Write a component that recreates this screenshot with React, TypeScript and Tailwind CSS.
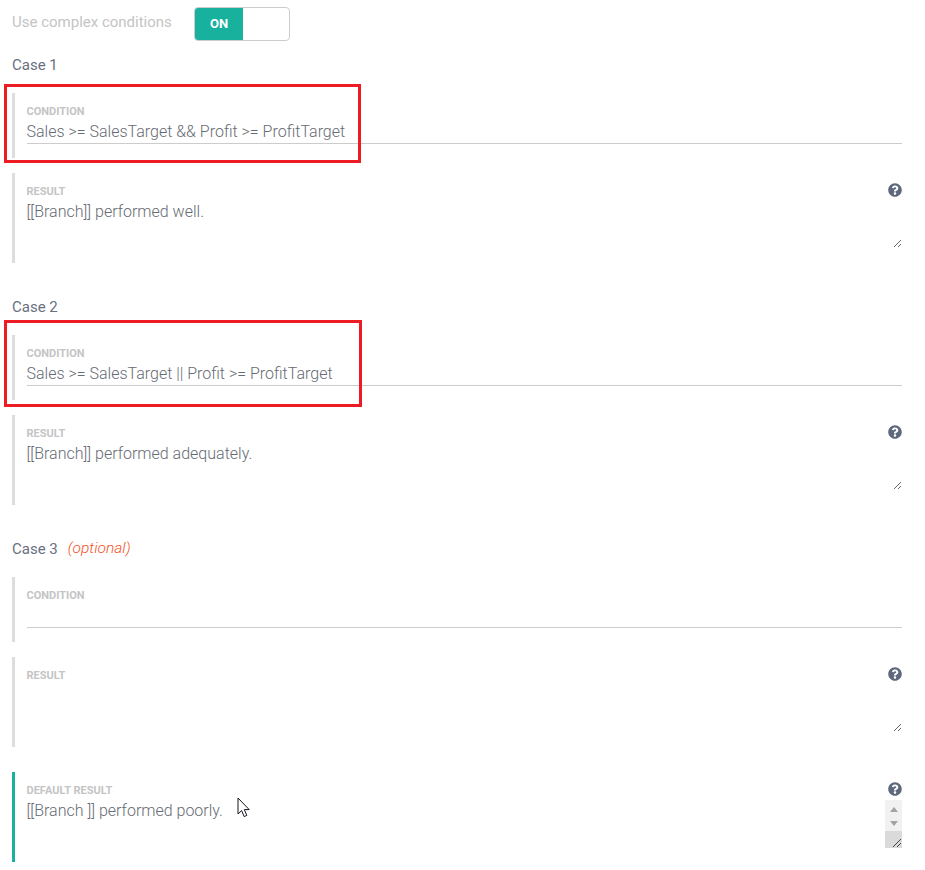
import { FaQuestionCircle } from "react-icons/fa";

type FieldProps = {
  label: string;
  value?: string;
};

function HelpIcon() {
  return <FaQuestionCircle className="absolute right-0 top-[10px] text-[14px] text-[#5d687c]" />;
}

function ConditionField({ label, value = "" }: FieldProps) {
  return (
    <div className="h-[65px] border-l-[3px] border-[#dddddd] pl-[11.5px] pt-[13px]">
      <label className="block text-[11px] font-bold uppercase leading-[12px] text-[#c4c4c4]">{label}</label>
      <input
        readOnly
        value={value}
        className="block h-[26px] w-full border-b border-[#cccccc] bg-transparent pt-[2px] text-[16px] font-light text-[#666b73] outline-none"
      />
    </div>
  );
}

function ResultField({ label, value = "", scrollbar = false, accent = false }: FieldProps & { scrollbar?: boolean; accent?: boolean }) {
  return (
    <div className={`relative h-[90px] border-l-[3px] pl-[11.5px] pt-[13px] ${accent ? "border-[#17b19e]" : "border-[#dddddd]"}`}>
      <label className="block text-[11px] font-bold uppercase leading-[12px] text-[#c4c4c4]">{label}</label>
      <HelpIcon />
      <textarea
        readOnly
        value={value}
        className={`mt-[4px] block h-[46px] w-full bg-transparent text-[16px] font-light leading-[20px] text-[#666b73] outline-none ${scrollbar ? "resize-none" : "resize-y"}`}
      />
      {scrollbar && (
        <div className="absolute right-0 top-[28px] flex h-[48px] w-[17px] flex-col items-center bg-[#f1f1f1]">
          <span className="mt-[7px] h-0 w-0 border-x-[4px] border-b-[5px] border-x-transparent border-b-[#a3a3a3]" />
          <span className="mt-[9px] h-0 w-0 border-x-[4px] border-t-[5px] border-x-transparent border-t-[#a3a3a3]" />
          <span className="relative mt-auto flex h-[17px] w-full items-end justify-end bg-[#dadada]">
            <svg width="10" height="10" viewBox="0 0 10 10" className="text-[#444]">
              <path d="M1 9 9 1M5 9 9 5" stroke="currentColor" strokeWidth="1" />
            </svg>
          </span>
        </div>
      )}
    </div>
  );
}

function CaseBlock({ title, optional, condition, result }: { title: string; optional?: boolean; condition?: string; result?: string }) {
  return (
    <section className="flex flex-col">
      <h3 className="flex h-[20px] items-center pt-[2px] text-[15px] font-normal text-[#697080]">
        {title}
        {optional && <em className="ml-[10px] text-[15.5px] font-light text-[#f4511e]">(optional)</em>}
      </h3>
      <div className="mt-[19px] flex flex-col gap-[15px]">
        <ConditionField label="Condition" value={condition} />
        <ResultField label="Result" value={result} />
      </div>
    </section>
  );
}

export default function App() {
  return (
    <div className="relative h-[870px] w-[925px] overflow-hidden bg-white font-['Roboto',sans-serif]">
      <div className="flex w-[902px] flex-col pl-3 pt-[7px]">
        <div className="flex h-[34px] items-center">
          <span className="w-[182px] pb-[3px] text-[15px] text-[#c4c4c4]">Use complex conditions</span>
          <div className="flex h-[34px] w-[96px] overflow-hidden rounded border border-[#cccccc]">
            <span className="flex w-[48px] items-center justify-center bg-[#17b19e] text-[13px] font-bold text-white">ON</span>
          </div>
        </div>
        <div className="mt-[13px] flex flex-col gap-[33px]">
          <CaseBlock title="Case 1" condition="Sales >= SalesTarget && Profit >= ProfitTarget" result="[[Branch]] performed well." />
          <CaseBlock title="Case 2" condition="Sales >= SalesTarget || Profit >= ProfitTarget" result="[[Branch]] performed adequately." />
          <CaseBlock title="Case 3" optional />
        </div>
        <div className="mt-[25px]">
          <ResultField label="Default Result" value="[[Branch ]] performed poorly." scrollbar accent />
        </div>
      </div>
      <div className="absolute left-[4px] top-[84px] h-[79px] w-[357px] border-[3px] border-[#ed1c24]" />
      <div className="absolute left-[4px] top-[320px] h-[87px] w-[358px] border-[3px] border-[#ed1c24]" />
      <svg className="absolute left-[237px] top-[797px]" width="14" height="22" viewBox="0 0 14 22">
        <path d="M1 1v16l3.6-3.4 2.6 6 2.6-1.2-2.5-5.8h4.9z" fill="#fff" stroke="#14141f" strokeWidth="1" />
      </svg>
    </div>
  );
}
